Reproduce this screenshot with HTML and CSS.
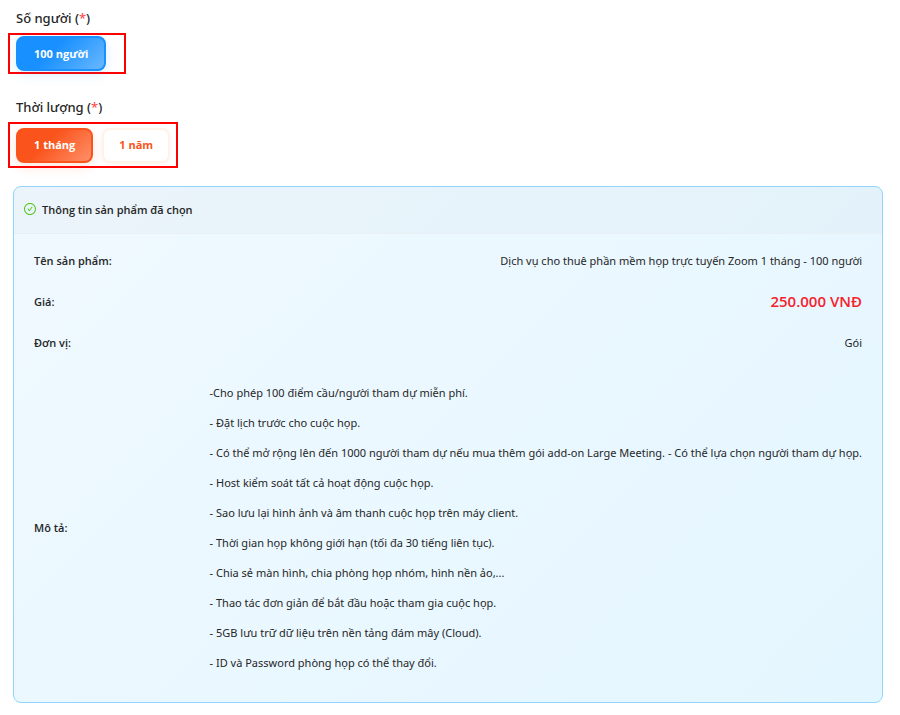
FILE: index.html
```html
<!DOCTYPE html>
<html lang="vi">
<head>
	<meta charset="utf-8">
	<meta name="viewport" content="width=device-width, initial-scale=1">
	<title>Chọn gói dịch vụ Zoom</title>
	<link rel="stylesheet" href="styles.css">
</head>
<body>
<div class="option">
	<div class="option-title" id="people">Số người (<span class="required">*</span>)</div>
	<div class="option-frame option-people" role="group" aria-labelledby="people">
		<button type="button" class="btn btn-blue" aria-pressed="true">100 người</button>
	</div>
</div>
<div class="option">
	<div class="option-title" id="duration">Thời lượng (<span class="required">*</span>)</div>
	<div class="option-frame option-duration" role="group" aria-labelledby="duration">
		<button type="button" class="btn btn-orange" aria-pressed="true">1 tháng</button>
		<button type="button" class="btn btn-plain" aria-pressed="false">1 năm</button>
	</div>
</div>

<div class="card">
	<div class="card-head">
		<svg class="check" viewBox="64 64 896 896" fill="#52c41a" aria-hidden="true">
			<path d="M699 353h-46.900c-10.200 0-19.900 4.900-25.900 13.300L469 584.300l-71.200-98.800c-6-8.300-15.600-13.300-25.900-13.300H325c-6.500 0-10.300 7.400-6.500 12.700l124.600 172.800a31.800 31.800 0 0 0 51.700 0l210.600-292c3.900-5.300.1-12.700-6.400-12.700z"/>
			<path d="M512 64C264.600 64 64 264.600 64 512s200.600 448 448 448 448-200.600 448-448S759.400 64 512 64zm0 820c-205.400 0-372-166.600-372-372s166.600-372 372-372 372 166.600 372 372-166.600 372-372 372z"/>
		</svg>
		<span>Thông tin sản phẩm đã chọn</span>
	</div>
	<div class="card-body">
		<table class="info">
			<tr>
				<th scope="row">Tên sản phẩm:</th>
				<td>Dịch vụ cho thuê phần mềm họp trực tuyến Zoom 1 tháng - 100 người</td>
			</tr>
			<tr>
				<th scope="row">Giá:</th>
				<td class="price">250.000 VNĐ</td>
			</tr>
			<tr>
				<th scope="row">Đơn vị:</th>
				<td>Gói</td>
			</tr>
			<tr>
				<th scope="row">Mô tả:</th>
				<td>
					<div class="desc">
						<p>-Cho phép 100 điểm cầu/người tham dự miễn phí.</p>
						<p>- Đặt lịch trước cho cuộc họp.</p>
						<p>- Có thể mở rộng lên đến 1000 người tham dự nếu mua thêm gói add-on Large Meeting. - Có thể lựa chọn người tham dự họp.</p>
						<p>- Host kiểm soát tất cả hoạt động cuộc họp.</p>
						<p>- Sao lưu lại hình ảnh và âm thanh cuộc họp trên máy client.</p>
						<p>- Thời gian họp không giới hạn (tối đa 30 tiếng liên tục).</p>
						<p>- Chia sẻ màn hình, chia phòng họp nhóm, hình nền ảo,...</p>
						<p>- Thao tác đơn giản để bắt đầu hoặc tham gia cuộc họp.</p>
						<p>- 5GB lưu trữ dữ liệu trên nền tảng đám mây (Cloud).</p>
						<p>- ID và Password phòng họp có thể thay đổi.</p>
					</div>
				</td>
			</tr>
		</table>
	</div>
</div>
</body>
</html>
```
FILE: styles.css
```css
* {
	box-sizing: border-box;
}
body {
	margin: 0;
	padding: 3px 8px 12px;
	background: #fff;
	color: #262626;
	font-family: "Segoe UI", "Open Sans", "Noto Sans", sans-serif;
	font-size: 11px;
	line-height: 21px;
}

/* option groups */
.option {
	margin-bottom: 18px;
}
.option-title {
	padding: 0 8px;
	font-family: "Segoe UI", "Noto Sans", sans-serif;
	font-size: 13px;
	font-weight: 500;
	line-height: 30px;
}
.required {
	color: #ff4d4f;
}
.option-frame {
	display: flex;
	align-items: center;
	gap: 9px;
	width: fit-content;
	border: 2px solid #ff0000;
	padding: 1px 6px;
}
.option-people {
	height: 41px;
	padding-right: 18px;
}
.option-duration {
	height: 46px;
}
.btn {
	height: 35px;
	border: 2px solid;
	border-radius: 8px;
	padding: 0 16px;
	font: 700 11px/20px "Segoe UI", "Open Sans", "Noto Sans", sans-serif;
	white-space: nowrap;
	cursor: pointer;
}
.btn-blue {
	border-color: #1890ff;
	background: linear-gradient(135deg, #1890ff 40%, #69b8ff);
	color: #fff;
	box-shadow: 0 4px 12px rgba(24, 144, 255, .15);
}
.btn-orange {
	border-color: #fa541c;
	background: linear-gradient(135deg, #fa541c 40%, #ff9068);
	color: #fff;
	box-shadow: 0 4px 12px rgba(250, 84, 28, .15);
}
.btn-plain {
	padding: 0 15px;
	border-color: #fff2e8;
	background: #fff;
	color: #fa541c;
	box-shadow: 0 1px 4px rgba(250, 84, 28, .08);
}

/* selected product */
.card {
	margin: 0 9px 0 5px;
	border: 1px solid #91d5ff;
	border-radius: 8px;
	background: linear-gradient(135deg, #f0f9ff, #e4f6ff);
	overflow: hidden;
}
.card-head {
	display: flex;
	align-items: center;
	gap: 6px;
	height: 47px;
	padding: 0 10px 2px;
	border-bottom: 1px solid #e8f0f5;
	background: rgba(0, 0, 0, .02);
	font-weight: 600;
}
.check {
	width: 12px;
	height: 12px;
}
.card-body {
	padding: 6px 20px 10px;
}
.info {
	width: 100%;
	border-collapse: collapse;
}
.info th,
.info td {
	padding: 10px 0;
	text-align: right;
}
.info td {
	font-family: "Segoe UI", "Noto Sans", sans-serif;
}
.info th {
	padding-right: 20px;
	font-weight: 600;
	text-align: left;
	white-space: nowrap;
}
.info .price {
	color: #f5222d;
	font-family: "Segoe UI", "Open Sans", sans-serif;
	font-size: 15px;
	font-weight: 600;
}
.desc {
	width: fit-content;
	margin-left: auto;
	text-align: left;
}
.desc p {
	margin: 9px 0;
}
```
